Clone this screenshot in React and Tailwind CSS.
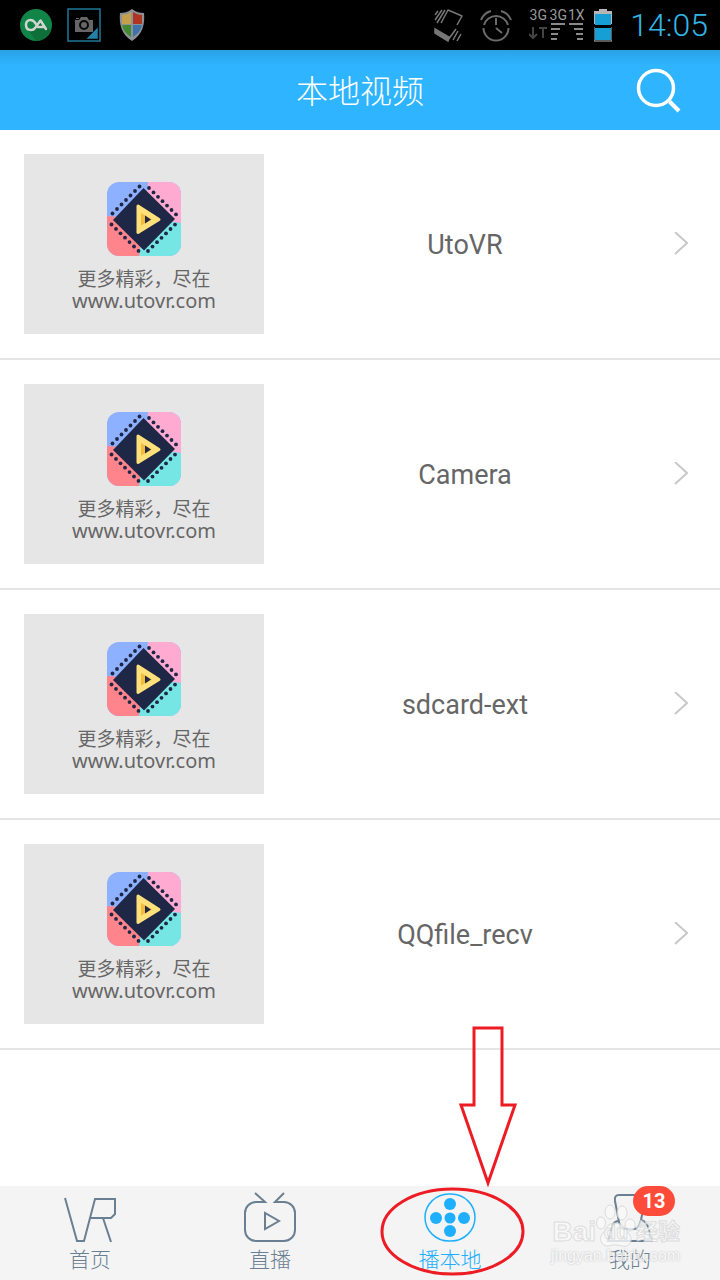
import React from "react";

const folders = ["UtoVR", "Camera", "sdcard-ext", "QQfile_recv"];

// sprocket holes along the four sides of the diamond
const holes = [0, 1, 2, 3, 4, 5, 6].flatMap((i) => [
  [5.5 + i * 4.5, 31.5 - i * 4.5],
  [42 + i * 4.5, 6 + i * 4.4],
  [4.5 + i * 4.5, 42.5 + i * 4.4],
  [41 + i * 4.5, 69 - i * 4.4],
]);

const UtoLogo = () => (
  <svg className="size-[74px]" viewBox="0 0 74 74">
    <defs>
      <clipPath id="tile">
        <rect width="74" height="74" rx="12" />
      </clipPath>
    </defs>
    <g clipPath="url(#tile)">
      <rect width="74" height="74" fill="#8db0ff" />
      <path d="M41 0H74V41L37 37Z" fill="#ffaad0" />
      <path d="M74 41V74H32L37 37Z" fill="#76e6e4" />
      <path d="M32 74H0V34L37 37Z" fill="#ff848c" />
      <path d="M36.500 6L68 37L37 68.500L6 38Z" fill="#1e2846" />
      {holes.map(([x, y]) => (
        <circle key={`${x}-${y}`} cx={x} cy={y} r="1.900" fill="#1e2846" />
      ))}
      <path
        d="M31 24L52 37.500L31 50.500Z"
        fill="#ffe07a"
        stroke="#ffe07a"
        strokeWidth="3"
        strokeLinejoin="round"
      />
      <path d="M34 31L45 37.500L34 43.500Z" fill="#f2bd3b" />
      <path d="M38 33.500L44 37.500L38 41.500Z" fill="#1e2846" />
    </g>
  </svg>
);

const Signal = () => (
  <div className="ml-4 flex gap-0.5 font-['Roboto',sans-serif] text-[14px] leading-4 text-[#999]">
    <div className="flex w-5 flex-col items-center">
      <span>3G</span>
      <svg className="h-5 w-[18px]" viewBox="0 0 18 20" fill="none" stroke="#444" strokeWidth="2">
        <path d="M4 4V15M0 11L4 15L8 11M10 5H18M14 5V15" />
      </svg>
    </div>
    <div className="flex w-4 flex-col items-center">
      <span>3G</span>
      <svg className="h-5 w-3.5" viewBox="0 0 14 20" fill="none" stroke="#8a8a8a" strokeWidth="2">
        <path d="M0 1H14M0 6H9M0 11H7M0 16H6" />
      </svg>
    </div>
    <div className="flex w-4 flex-col items-center">
      <span>1X</span>
      <svg className="h-5 w-3.5" viewBox="0 0 14 20" fill="none" stroke="#8a8a8a" strokeWidth="2">
        <path d="M0 1H14M5 6H14M7 11H14M8 16H14" />
      </svg>
    </div>
  </div>
);

const StatusBar = () => (
  <div className="flex h-[50px] items-center justify-between bg-black px-3">
    <div className="flex items-center gap-[15px] pl-2">
      <svg className="size-8" viewBox="0 0 32 32" fill="none">
        <circle cx="16" cy="16" r="16" fill="#118548" />
        <path d="M9 22L20 11L31 22A16 16 0 0 1 16 32Z" fill="#0c7038" />
        <path
          d="M26 20L20.500 11.500L15 19C13 22 6 22 6 16C6 10 12 10 14.500 13L18 18H23"
          stroke="#d0d5d1"
          strokeWidth="2.500"
          strokeLinejoin="round"
          strokeLinecap="round"
        />
      </svg>
      <svg className="size-[34px]" viewBox="0 0 34 34">
        <rect x="1" y="1" width="32" height="32" fill="none" stroke="#1f7797" strokeWidth="1.500" />
        <path d="M8 12H12L14 9H20L22 12H26V24H8ZM9 10H12V11H9Z" fill="#666" />
        <circle cx="17" cy="17" r="4" fill="#666" stroke="#080808" strokeWidth="2" />
        <path d="M31 19V31H19Z" fill="#237fa5" stroke="#000" strokeWidth="0.500" />
      </svg>
      <svg className="ml-0.5 h-8 w-7" viewBox="0 0 28 32">
        <path d="M14 0C18 3 22 4 26 4C27 15 25 25 14 32C3 25 1 15 2 4C6 4 10 3 14 0Z" fill="#8d9296" />
        <path d="M13 3V15H4V6C7 6 10 5 13 3Z" fill="#c5a04b" />
        <path d="M15 3V15H24V6C21 6 18 5 15 3Z" fill="#af3522" />
        <path d="M4 16H13V28C8 25 5 21 4 16Z" fill="#418a31" />
        <path d="M24 16H15V28C20 25 23 21 24 16Z" fill="#3e72ad" />
      </svg>
    </div>

    <div className="flex items-center">
      <svg className="h-9 w-[30px]" viewBox="0 0 30 36" fill="none" stroke="#777" strokeWidth="1.500">
        <path d="M7 16L14 3L28 9L23 18M14 33L22 22" strokeLinejoin="round" />
        <path d="M1 22L15 30L14 34L1 26Z" fill="#777" />
        <path d="M1 8L4 4M1 13L8 3M3 16L11 3M19 33L24 24M23 34L27 27" />
      </svg>
      <svg className="ml-4 h-9 w-8" viewBox="0 0 32 36" fill="none" stroke="#6b6b6b" strokeWidth="2">
        <path d="M4 18A12.500 12.500 0 0 1 28 18M3.500 21A12.500 12.500 0 0 0 28.500 21" />
        <path d="M16 11V18M16 21L22 26M1 13C3 8 7 5 11 4M21 4C25 5 29 8 31 13" />
      </svg>
      <Signal />
      <svg className="ml-2.5 h-9 w-[18px]" viewBox="0 0 18 36">
        <path d="M5 2H13V4H18V17H0V4H5Z" fill="#b5b5b5" />
        <path d="M1 7H17V18H1ZM1 21H17V33H1Z" fill="#169fd5" />
        <path d="M0 20V34H18V20" fill="none" stroke="#b5b5b5" />
      </svg>
      <time className="ml-[18px] font-['Roboto',sans-serif] text-[32px] leading-9 font-light text-[#33b5e5]">
        14:05
      </time>
    </div>
  </div>
);

const Row = ({ name }) => (
  <li className="border-b-2 border-[#e5e5e5]">
    <button className="flex w-full items-center py-6 pl-6">
      <span className="flex h-[180px] w-[240px] shrink-0 flex-col items-center bg-[#e6e6e6] pt-7 text-[#666]">
        <UtoLogo />
        <span className="mt-3 text-[19px] leading-[22px]">
          更多精彩，尽在
          <br />
          <span className="text-[20px]">www.utovr.com</span>
        </span>
      </span>
      <span className="flex-1 pt-0.5 text-center font-['Roboto',sans-serif] text-[27px] leading-8 text-[#666]">
        {name}
      </span>
      <svg className="mr-8 ml-1.5 h-6 w-4 shrink-0" viewBox="0 0 16 24" fill="none" stroke="#c8c8c8" strokeWidth="2">
        <path d="M3 0L15 11L3 22" />
      </svg>
    </button>
  </li>
);

const HomeIcon = () => (
  <svg className="h-[52px] w-14" viewBox="0 0 56 52" fill="none" stroke="#6b7f92" strokeWidth="2">
    <path d="M3 8L15 51H22L33 9H53V24L49 28H28M41 28L49 52" />
  </svg>
);

const LiveIcon = () => (
  <svg className="h-[52px] w-14" viewBox="0 0 56 52" fill="none" stroke="#6b7f92" strokeWidth="2">
    <path d="M13 3L23 12H14A11 11 0 0 0 3 23V40A11 11 0 0 0 14 51H42A11 11 0 0 0 53 40V23A11 11 0 0 0 42 12H33L42 3" />
    <path d="M23 23V39L37 31Z" />
  </svg>
);

const LocalIcon = () => (
  <svg className="h-[52px] w-14" viewBox="0 0 56 52" fill="#1eafff">
    <rect x="3" y="4" width="50" height="47" rx="24" fill="none" stroke="#1eafff" strokeWidth="1.500" />
    <circle cx="28" cy="14" r="6" />
    <circle cx="14" cy="28" r="6" />
    <circle cx="28" cy="28" r="5.500" />
    <circle cx="42" cy="28" r="6" />
    <circle cx="28" cy="41" r="6" />
  </svg>
);

const MineIcon = () => (
  <svg className="h-[52px] w-14" viewBox="0 0 56 52" fill="none" stroke="#6b7f92" strokeWidth="2">
    <path d="M17 5H40Q44 5 43 10L39 30Q37 39 32 39H23Q18 39 17 32L13 11Q12 5 17 5Z" />
    <path d="M16 31Q11 32 10 37L6 51H50L46 37Q45 32 39 30" />
  </svg>
);

const Watermark = () => (
  <div className="pointer-events-none absolute right-10 bottom-4 flex flex-col items-end whitespace-nowrap opacity-80">
    <div className="flex items-center font-['Liberation_Sans','Noto_Sans_CJK_SC',sans-serif] text-[28px] leading-8 font-bold text-[#fafafa] [-webkit-text-stroke:1px_#d8d8d8]">
      <span>Bai</span>
      <span className="relative w-10 text-center text-[20px]">
        <svg className="absolute -top-3 left-0 h-11 w-10" viewBox="0 0 40 44" fill="#fafafa" stroke="#d5d5d5">
          <ellipse cx="5" cy="19" rx="4.500" ry="6" />
          <ellipse cx="14" cy="8" rx="5" ry="7" />
          <ellipse cx="26" cy="9" rx="5" ry="7" />
          <ellipse cx="34" cy="21" rx="5" ry="6" />
          <path d="M19 19C11 19 11 25 7 29C2 34 5 43 13 42C18 40 22 41 26 42C35 44 38 34 32 29C28 25 28 19 19 19Z" />
        </svg>
        <span className="relative">du</span>
      </span>
      <span className="text-[22px]">经验</span>
    </div>
    <div className="font-['Liberation_Sans',sans-serif] text-[16px] leading-4 text-[#fafafa] [text-shadow:0_0_2px_#aaa]">
      jingyan.baidu.com
    </div>
  </div>
);

const tabs = [
  { label: "首页", icon: <HomeIcon /> },
  { label: "直播", icon: <LiveIcon /> },
  { label: "播本地", icon: <LocalIcon />, active: true },
  { label: "我的", icon: <MineIcon />, badge: 13 },
];

const App = () => {
  return (
    <div className="flex min-h-screen flex-col bg-white font-['Noto_Sans','Noto_Sans_CJK_SC',sans-serif]">
      <StatusBar />
      <header className="grid h-20 grid-cols-[84px_1fr_84px] items-center bg-[#2fb5ff] bg-linear-to-b from-[#2aa2e5] to-[#2fb5ff] to-20% text-white">
        <h1 className="col-start-2 pt-0.5 text-center text-[32px] leading-10 font-light">本地视频</h1>
        <button aria-label="搜索">
          <svg className="size-12" viewBox="0 0 48 48" fill="none" stroke="#fff">
            <circle cx="20" cy="22" r="17.500" strokeWidth="3.500" />
            <path d="M33.500 35.500L43 45" strokeWidth="4" />
          </svg>
        </button>
      </header>

      <ul>
        {folders.map((name) => (
          <Row key={name} name={name} />
        ))}
      </ul>

      <nav className="relative mt-auto grid h-[94px] grid-cols-4 bg-[#f4f4f4]">
        {tabs.map((tab) => (
          <div key={tab.label} className="relative flex justify-center">
            <button
              className={`flex flex-col items-center pt-1 text-[21px] leading-[34px] font-light ${
                tab.active ? "text-[#1eafff]" : "text-[#6b7f92]"
              }`}
            >
              {tab.icon}
              <span>{tab.label}</span>
            </button>
            {tab.badge && (
              <span className="absolute top-0 left-1/2 z-10 ml-[3px] h-[30px] w-[42px] rounded-full bg-[#ff4b3a] text-center font-['Roboto',sans-serif] text-[20px] leading-[30px] font-bold text-white">
                {tab.badge}
              </span>
            )}
            {tab.active && (
              <svg
                className="pointer-events-none absolute bottom-0 h-[260px] w-[180px]"
                viewBox="0 0 180 260"
                fill="none"
                stroke="#ed1c24"
                strokeWidth="3"
              >
                <path d="M114 8H142V85H155L128 163L101 85H114Z" />
                <ellipse cx="92.500" cy="211.500" rx="70.500" ry="42.500" />
              </svg>
            )}
          </div>
        ))}
        <Watermark />
      </nav>
    </div>
  );
};

export default App;
